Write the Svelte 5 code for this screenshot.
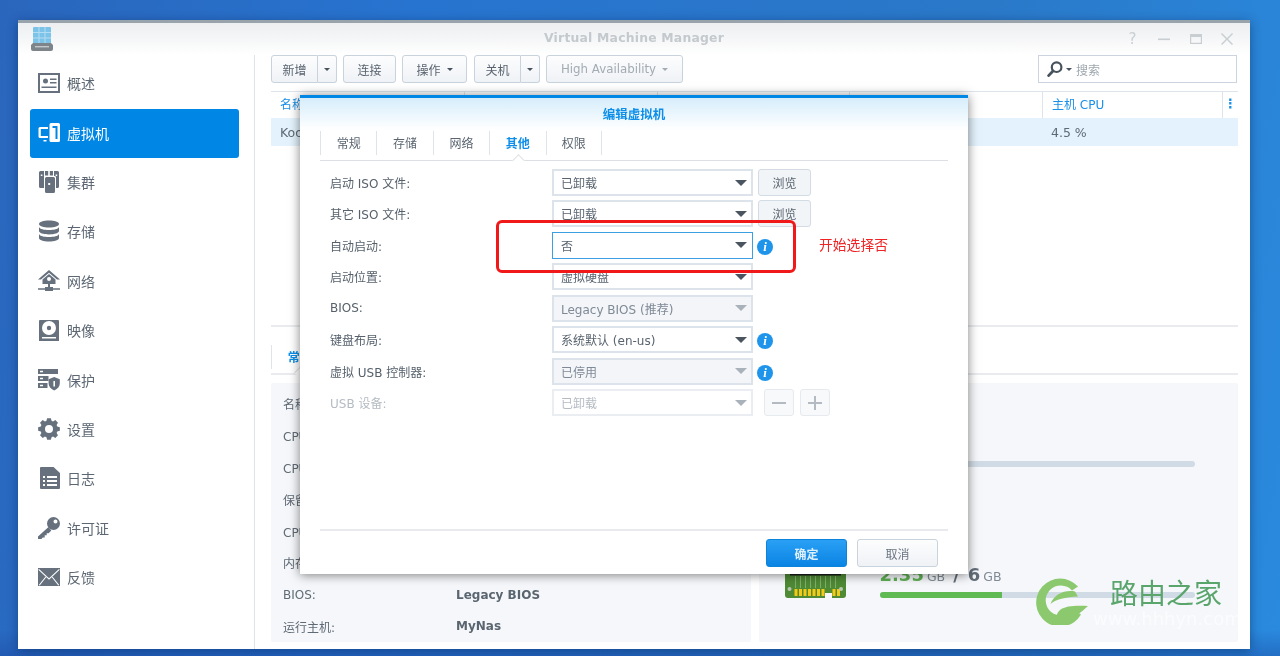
<script>
	// gear outline for the settings entry, 8 teeth around (11, 11)
	function gearPath() {
		const pts = [];
		for (let i = 0; i < 8; i++) {
			const a = (i * Math.PI) / 4;
			for (const [r, off] of [[8.6, -0.3], [11, -0.17], [11, 0.17], [8.6, 0.3]]) {
				pts.push(`${(11 + r * Math.cos(a + off)).toFixed(2)} ${(11 + r * Math.sin(a + off)).toFixed(2)}`);
			}
		}
		return `M${pts.join('L')}z M7 11a4 4 0 1 0 8 0a4 4 0 1 0-8 0z`;
	}

	const nav = [
		{ label: '概述', paths: ['M0 1h22v20H0z M2 3v16h18V3z M5 9a2.5 2.5 0 1 0 5 0a2.5 2.5 0 1 0-5 0z M12 6.5h6.5V8H12z M12 10h6.5v1.5H12z M3.5 14.5h15V16h-15z'] },
		{ label: '虚拟机', active: true, paths: ['M11.5 2.5A1.5 1.5 0 0 1 13 1h7.5A1.5 1.5 0 0 1 22 2.5v16a1.5 1.5 0 0 1-1.5 1.5H13a1.5 1.5 0 0 1-1.5-1.5z M14.5 4v2h3v11h2V4z', 'M10 5H2A1.5 1.5 0 0 0 .5 6.5v8A1.5 1.5 0 0 0 2 16h8v-2H2.8V7H10z M5.5 18h3v1.6h-3z'] },
		{ label: '集群', paths: ['M1 1.5A1.5 1.5 0 0 1 2.5 0H6v17H2.5A1.5 1.5 0 0 1 1 15.5z M2.8 3.5v1.6h1.6V3.5z', 'M16 0h3.5A1.5 1.5 0 0 1 21 1.5v14a1.5 1.5 0 0 1-1.5 1.5H18V6.5A1.5 1.5 0 0 0 16 5z M17.6 3.5v1.6h1.6V3.5z', 'M7 0h3.2v4.6H7z M11.8 0H15v4.6h-3.2z', 'M7 7.5A1.5 1.5 0 0 1 8.5 6h7A1.5 1.5 0 0 1 17 7.5v13a1.5 1.5 0 0 1-1.5 1.5h-7A1.5 1.5 0 0 1 7 20.5z M10.2 12v2h2v-2z'] },
		{ label: '存储', paths: ['M1 4c0-2 4.5-3.5 10-3.5S21 2 21 4s-4.5 3.5-10 3.5S1 6 1 4z', 'M1 7c1 2.2 5 3 10 3s9-.8 10-3v4c0 2-4.5 3.4-10 3.4S1 13 1 11z', 'M1 14c1 2.2 5 3 10 3s9-.8 10-3v4c0 2-4.5 3.5-10 3.5S1 20 1 18z'] },
		{ label: '网络', paths: ['M11 0l11 9.5h-3L11 2.8 3 9.5H0z', 'M4.5 9.4L11 4l6.5 5.4V14h-13z M9 9a2 2 0 1 0 4 0a2 2 0 1 0-4 0z', 'M10 14h2v3h-2z', 'M0 18.2h7V17h8v1.2h7v1.5h-7V21H7v-1.3H0z'] },
		{ label: '映像', paths: ['M1 2a1 1 0 0 1 1-1h18a1 1 0 0 1 1 1v20H1z M4 9a7 7 0 1 0 14 0a7 7 0 1 0-14 0z M8.8 9a2.2 2.2 0 1 0 4.4 0a2.2 2.2 0 1 0-4.4 0z M4 18h14v1.6H4z'] },
		{ label: '保护', paths: ['M0 0h20v5H0z M2 1.8v1.5h3V1.8z', 'M0 7h10.5v5H0z M2 8.8v1.5h3V8.8z', 'M0 14h9.5v5H0z M2 15.8v1.5h3v-1.5z', 'M16.2 8l5.6 2.2v4.6c0 3-2.6 5.2-5.6 6.6-3-1.4-5.6-3.6-5.6-6.6v-4.6z M15.4 12v5.5H17V12z'] },
		{ label: '设置', paths: [gearPath()] },
		{ label: '日志', paths: ['M2 1a1 1 0 0 1 1-1h12.5L22 6v15a1 1 0 0 1-1 1H3a1 1 0 0 1-1-1z M5 9v2h2V9z M9 9v2h10V9z M5 13v2h2v-2z M9 13v2h10v-2z M5 17v2h2v-2z M9 17v2h10v-2z'] },
		{ label: '许可证', paths: ['M9 6.5a6.5 6.5 0 1 0 13 0a6.5 6.5 0 1 0-13 0z M15.5 4.5a2 2 0 1 0 4 0a2 2 0 1 0-4 0z', 'M10.5 10L0 19.5V22h3.5l1.2-1.6h2v-2.1h2v-2.1h2l2.6-2.6z'] },
		{ label: '反馈', paths: ['M0 2h22v18H0z M1 3l10 9.3L21 3l.7.8L11 13.8.3 3.8z M.8 19L7.6 10.4l.8.7-6.7 8.5z M21.2 19l-6.8-8.6-.8.7 6.7 8.5z'] }
	];

	const columns = ['名称', '状态', '运行主机', 'IP 地址', '主机 CPU'];
	const dialogTabs = ['常规', '存储', '网络', '其他', '权限'];

	const fields = [
		{ label: '启动 ISO 文件:', value: '已卸载', after: 'browse' },
		{ label: '其它 ISO 文件:', value: '已卸载', after: 'browse' },
		{ label: '自动启动:', value: '否', state: 'focus', after: 'info' },
		{ label: '启动位置:', value: '虚拟硬盘' },
		{ label: 'BIOS:', value: 'Legacy BIOS (推荐)', state: 'disabled' },
		{ label: '键盘布局:', value: '系统默认 (en-us)', after: 'info' },
		{ label: '虚拟 USB 控制器:', value: '已停用', state: 'disabled', after: 'info' },
		{ label: 'USB 设备:', value: '已卸载', state: 'off', after: 'stepper' }
	];

	const details = [
		['名称:', 'Koolshare'],
		['CPU 数量:', '2'],
		['CPU 兼容模式:', '已停用'],
		['保留 CPU 线程:', '已停用'],
		['CPU 优先级:', '普通'],
		['内存:', '2 GB'],
		['BIOS:', 'Legacy BIOS'],
		['运行主机:', 'MyNas']
	];
</script>

<div class="desktop">
	<div class="window">
		<header class="titlebar">
			<svg class="app-icon" viewBox="0 0 22 24" width="22" height="24" aria-hidden="true">
				<path fill="#7cc3ea" d="M2 1a1 1 0 0 1 1-1h16a1 1 0 0 1 1 1v16H2z" />
				<path fill="none" stroke="#b4dcf2" stroke-width="1" d="M8 0v17M14 0v17M2 5.5h18M2 11h18" />
				<path fill="#7d858b" d="M2 16h18l2 2v4a2 2 0 0 1-2 2H2a2 2 0 0 1-2-2v-4z" />
				<path fill="#c3c8cc" d="M4 19h14v1.4H4z" />
			</svg>
			<div class="title">Virtual Machine Manager</div>
			<div class="win-controls">
				<span class="help">?</span>
				<svg viewBox="0 0 12 12" width="12" height="12"><path d="M0 5.5h12v1.6H0z" /></svg>
				<svg viewBox="0 0 12 12" width="12" height="12"><path fill-rule="evenodd" d="M0 1h12v10H0z M1.2 4v5.8h9.6V4z" /></svg>
				<svg viewBox="0 0 12 12" width="12" height="12"><path d="M1 0l5 5 5-5 1 1-5 5 5 5-1 1-5-5-5 5-1-1 5-5-5-5z" /></svg>
			</div>
		</header>

		<div class="body">
			<nav class="sidebar">
				{#each nav as item}
					<div class="nav-item" class:active={item.active}>
						<svg viewBox="0 0 22 22" width="22" height="22" aria-hidden="true">
							{#each item.paths as d}
								<path fill="currentColor" fill-rule="evenodd" {d} />
							{/each}
						</svg>
						<span>{item.label}</span>
					</div>
				{/each}
			</nav>

			<main class="main">
				<div class="toolbar">
					<div class="btn-split">
						<button class="btn">新增</button>
						<button class="btn btn-caret"><span class="caret"></span></button>
					</div>
					<button class="btn">连接</button>
					<button class="btn">操作<span class="caret"></span></button>
					<div class="btn-split btn-split-power">
						<button class="btn">关机</button>
						<button class="btn btn-caret"><span class="caret"></span></button>
					</div>
					<button class="btn btn-muted">High Availability<span class="caret"></span></button>
					<div class="search">
						<svg viewBox="0 0 16 16" width="16" height="16" aria-hidden="true">
							<circle cx="9.6" cy="6.2" r="4.8" fill="none" stroke="#47525d" stroke-width="2.2" />
							<path d="M6 10L1.6 14.6" stroke="#47525d" stroke-width="2.8" stroke-linecap="round" />
						</svg>
						<span class="caret"></span>
						<span class="search-hint">搜索</span>
					</div>
				</div>

				<section class="list">
					<div class="grid-row grid-head">
						{#each columns as col}
							<div class="cell">{col}</div>
						{/each}
						<div class="cell cell-menu">⋮</div>
					</div>
					<div class="grid-row grid-data">
						<div class="cell">Koolshare</div>
						<div class="cell">运行中</div>
						<div class="cell">MyNas</div>
						<div class="cell">-</div>
						<div class="cell">4.5 %</div>
						<div class="cell"></div>
					</div>
				</section>

				<section class="detail">
					<div class="detail-tabs">
						<div class="tab active">常规</div>
					</div>
					<div class="panels">
						<div class="panel info-panel">
							{#each details as [key, val]}
								<div class="info-row">
									<span class="info-key">{key}</span>
									<span class="info-val">{val}</span>
								</div>
							{/each}
						</div>
						<div class="panel gauges">
							<div class="gauge gauge-cpu">
								<div class="gauge-track"><div class="gauge-fill" style="width: 4.5%"></div></div>
							</div>
							<div class="gauge">
								<svg class="ram" viewBox="0 0 61 27" width="61" height="27" aria-hidden="true">
									<path fill="#4f8a35" d="M0 0h61v23a3 3 0 0 1-3 3H47v-5h-7v5H3a3 3 0 0 1-3-3z" />
									<path fill="#1d1d1d" d="M5 0h51v3.5H5z" />
									<path fill="#8cb878" d="M10 4h.8v12H10z M15 4h.8v12H15z M20 4h.8v12H20z M25 4h.8v12H25z M30 4h.8v12H30z M35 4h.8v12H35z M40 4h.8v12H40z M45 4h.8v12H45z M50 4h.8v12H50z" />
									<path fill="#f6c915" d="M9.5 17h3v7h-3z M14 17h3v7h-3z M18.5 17h3v7h-3z M23 17h3v7h-3z M27.5 17h3v7h-3z M32 17h3v7h-3z M36.5 17h3v7h-3z M47.5 17h3v7h-3z M52 17h3v7h-3z" />
									<circle cx="4.5" cy="17" r="2" fill="#b9c7b0" />
									<circle cx="56" cy="17" r="2" fill="#b9c7b0" />
								</svg>
								<div class="gauge-main">
									<div class="gauge-text"><b class="used">2.35</b><small>GB</small><b class="slash">/</b><b>6</b><small>GB</small></div>
									<div class="gauge-track"><div class="gauge-fill" style="width: 38.8%"></div></div>
								</div>
							</div>
						</div>
					</div>
				</section>
			</main>
		</div>

		<div class="dialog">
			<div class="dialog-title">编辑虚拟机</div>
			<div class="dialog-tabs">
				{#each dialogTabs as t}
					<div class="tab" class:active={t === '其他'}>{t}</div>
				{/each}
			</div>
			<div class="form">
				{#each fields as f}
					<div class="field" class:off={f.state === 'off'}>
						<div class="field-label">{f.label}</div>
						<div class="select {f.state ?? ''}">
							<span>{f.value}</span>
							<span class="select-arrow"></span>
						</div>
						{#if f.after === 'browse'}
							<button class="btn btn-browse">浏览</button>
						{:else if f.after === 'info'}
							<i class="info">i</i>
						{:else if f.after === 'stepper'}
							<div class="stepper">
								<button class="btn btn-step" aria-label="remove"><svg viewBox="0 0 14 14" width="14" height="14"><path d="M0 6h14v2H0z" /></svg></button>
								<button class="btn btn-step" aria-label="add"><svg viewBox="0 0 14 14" width="14" height="14"><path d="M6 0h2v6h6v2H8v6H6V8H0V6h6z" /></svg></button>
							</div>
						{/if}
					</div>
				{/each}
			</div>
			<div class="dialog-foot">
				<button class="btn btn-primary">确定</button>
				<button class="btn btn-cancel">取消</button>
			</div>
		</div>
	</div>

	<!-- annotation drawn on top of the capture -->
	<div class="mark"></div>
	<div class="mark-note">开始选择否</div>

	<div class="watermark">
		<svg viewBox="0 0 53 48" width="53" height="48" aria-hidden="true">
			<path fill="#8cc96e" d="M43 9.5A24 24 0 1 0 46 37.5L38 32A15 15 0 1 1 37 13.5z" />
			<path fill="#8cc96e" d="M40 14.5C30 12.5 19 17 15.5 27C20 22.5 31 20 43 19.5z" />
			<path fill="#8cc96e" d="M53 29C44 28.5 31 28 25 33C21.5 36 21 40 22 42C30 43 36 42 42 38C47 34.5 50 31.5 53 29z" />
		</svg>
		<div class="wm-name">路由之家</div>
		<div class="wm-url">www.hhhyn.com</div>
	</div>
</div>

<style>
	:global(body) {
		margin: 0;
		background: #2468c4;
	}

	.desktop {
		position: relative;
		width: 1280px;
		height: 656px;
		overflow: hidden;
		background:
			linear-gradient(to bottom, transparent 96%, rgba(20, 60, 150, 0.35)),
			linear-gradient(100deg, #2a66bc 0%, #2774d0 30%, #2a78c8 70%, #2a8ade 100%);
		font-family: "DejaVu Sans", "Noto Sans CJK SC", sans-serif;
		font-size: 12px;
		color: #5a6570;
		/* the capture is an upscaled, slightly soft image */
		filter: blur(0.4px);
	}

	.window {
		position: absolute;
		left: 18px;
		top: 20px;
		width: 1232px;
		height: 629px;
		box-sizing: border-box;
		display: flex;
		flex-direction: column;
		background: #fff;
		border-top: 3px solid #98a3ab;
		box-shadow: 0 2px 10px rgba(0, 30, 80, 0.45);
	}

	.titlebar {
		flex: none;
		height: 32px;
		display: grid;
		grid-template-columns: 1fr auto 1fr;
		align-items: start;
		padding: 4px 17px 0 13px;
		box-sizing: border-box;
		background: linear-gradient(#eceef0, #fff);
	}

	.app-icon {
		display: block;
	}

	.title {
		margin: 3px 0 0 4px;
		font-size: 12.4px;
		font-weight: bold;
		color: #c4c9ce;
		letter-spacing: 0.2px;
	}

	.win-controls {
		justify-self: end;
		display: flex;
		align-items: center;
		gap: 19.5px;
		margin-top: 6px;
		fill: #c9ced3;
	}

	.help {
		width: 12px;
		text-align: center;
		font-size: 15px;
		line-height: 12px;
		color: #c9ced3;
	}

	.body {
		flex: 1;
		display: flex;
		min-height: 0;
	}

	.sidebar {
		flex: none;
		width: 237px;
		box-sizing: border-box;
		padding: 4.6px 15px 0 12px;
		border-right: 1px solid #dfe3e7;
	}

	.nav-item {
		height: 49.4px;
		box-sizing: border-box;
		display: flex;
		align-items: center;
		gap: 7px;
		padding: 0 0 2px 8px;
		border-radius: 3px;
		font-size: 14px;
		color: #5c6773;
	}

	.nav-item svg {
		flex: none;
		color: #66717d;
	}

	.nav-item.active {
		background: #0086e5;
		color: #fff;
	}

	.nav-item.active svg {
		color: #fff;
	}

	.main {
		flex: 1;
		min-width: 0;
		display: flex;
		flex-direction: column;
		padding: 0 12px 8px 16px;
	}

	.toolbar {
		flex: none;
		display: flex;
		gap: 6px;
		height: 28px;
		margin-bottom: 8px;
	}

	.btn {
		box-sizing: border-box;
		height: 28px;
		padding: 0 13.5px;
		display: inline-flex;
		align-items: center;
		justify-content: center;
		gap: 6px;
		border: 1px solid #c8d3de;
		border-radius: 3px;
		background: linear-gradient(#fdfdfe, #eff2f6);
		font: inherit;
		color: #59646f;
	}

	.btn-split {
		display: flex;
	}

	.btn-split-power {
		margin-left: 1px;
	}

	.btn-split .btn:first-child {
		width: 47px;
		padding: 0;
		border-radius: 3px 0 0 3px;
	}

	.btn-caret {
		width: 19px;
		padding: 0;
		border-left: 0;
		border-radius: 0 3px 3px 0;
	}

	.btn-muted {
		width: 137px;
		padding: 0;
		font-size: 11.8px;
		color: #a3abb3;
	}

	.btn-muted .caret {
		border-top-color: #a3abb3;
	}

	.caret {
		display: inline-block;
		width: 0;
		height: 0;
		border: 3.5px solid transparent;
		border-top: 3.5px solid #47525d;
		border-bottom: 0;
	}

	.search {
		margin-left: auto;
		margin-right: 1px;
		width: 199px;
		box-sizing: border-box;
		display: flex;
		align-items: center;
		gap: 3px;
		padding-left: 8px;
		border: 1px solid #ccd5df;
		background: #fff;
	}

	.search-hint {
		margin-left: 1px;
		color: #a0a8b0;
	}

	.list {
		flex: none;
		height: 234px;
		border-top: 1px solid #dde4ec;
		box-sizing: border-box;
	}

	.grid-row {
		display: grid;
		grid-template-columns: 193px 193px 192px 193px 180px 16px;
		align-items: center;
	}

	.grid-head {
		height: 26px;
		color: #1a90e8;
	}

	.grid-head .cell {
		height: 100%;
		display: flex;
		align-items: center;
		padding: 0 0 3px 9px;
		box-sizing: border-box;
	}

	.grid-head .cell + .cell {
		border-left: 1px solid #dde4ec;
	}

	.grid-head .cell-menu {
		padding: 0 0 3px;
		justify-content: center;
		font-weight: bold;
		font-size: 13px;
	}

	.grid-data {
		height: 28px;
		background: #e3f2fc;
		color: #5e6974;
		font-size: 12.5px;
	}

	.grid-data .cell {
		padding-left: 9px;
	}

	.detail {
		flex: 1;
		min-height: 0;
		display: flex;
		flex-direction: column;
		border-top: 2px solid #e9ebee;
	}

	.detail-tabs {
		flex: none;
		height: 48px;
		box-sizing: border-box;
		display: flex;
		padding-top: 18px;
		border-bottom: 2px solid #e9ebee;
	}

	.tab {
		position: relative;
		width: 56.4px;
		height: 24px;
		box-sizing: border-box;
		display: flex;
		align-items: center;
		justify-content: center;
		padding-bottom: 2px;
		border-left: 1px solid #dfe4ea;
		color: #5a6570;
	}

	.tab.active {
		color: #0d8fe9;
		font-weight: bold;
	}

	.tab.active::after {
		content: "";
		position: absolute;
		left: 50%;
		bottom: -8px;
		width: 8px;
		height: 8px;
		margin-left: -4px;
		transform: rotate(45deg);
		background: #fff;
		border-left: 1px solid #dcdfe3;
		border-top: 1px solid #dcdfe3;
	}

	.panels {
		flex: 1;
		min-height: 0;
		display: grid;
		grid-template-columns: 1fr 1fr;
		gap: 8px;
		margin-top: 8px;
	}

	.panel {
		background: #f5f7fa;
		border-radius: 2px;
	}

	.info-panel {
		padding: 5px 12px 0;
	}

	.info-row {
		height: 31.8px;
		display: flex;
		align-items: center;
	}

	.info-key {
		width: 173px;
		flex: none;
		color: #5f6a75;
	}

	.info-val {
		font-weight: bold;
		color: #5a6570;
	}

	.gauges {
		padding: 48px 43px 0 26px;
		display: flex;
		flex-direction: column;
		gap: 95px;
	}

	.gauge {
		display: flex;
		align-items: flex-end;
		gap: 34px;
	}

	.gauge-cpu {
		height: 36px;
		padding-left: 95px;
	}

	.gauge-main {
		flex: 1;
	}

	.gauge-text {
		height: 25px;
		margin-bottom: 5px;
		display: flex;
		align-items: baseline;
		gap: 3px;
		font-size: 18px;
		line-height: 25px;
		color: #626d78;
	}

	.gauge-text .used {
		color: #5fb053;
	}

	.gauge-text small {
		font-size: 12.5px;
		color: #808a94;
	}

	.gauge-text .slash {
		margin: 0 5px;
	}

	.gauge-track {
		flex: 1;
		height: 6px;
		border-radius: 3px;
		background: #d0dbe5;
		overflow: hidden;
	}

	.gauge-fill {
		height: 100%;
		background: #60ba54;
	}

	.ram {
		flex: none;
		margin-bottom: -1px;
	}

	/* modal */
	.dialog {
		position: absolute;
		left: 282px;
		top: 72px;
		width: 668px;
		height: 479px;
		box-sizing: border-box;
		display: flex;
		flex-direction: column;
		background: #fff;
		border-top: 3px solid #0086e5;
		box-shadow: 0 1px 10px rgba(0, 0, 0, 0.5);
	}

	.dialog-title {
		flex: none;
		height: 32px;
		box-sizing: border-box;
		padding-bottom: 2px;
		display: flex;
		align-items: center;
		justify-content: center;
		background: linear-gradient(#d6edfb, #fff);
		font-size: 12.5px;
		font-weight: bold;
		color: #0d8fe9;
	}

	.dialog-tabs {
		flex: none;
		height: 31px;
		box-sizing: border-box;
		margin: 0 20px;
		padding-top: 1px;
		display: flex;
		border-bottom: 1px solid #dcdfe3;
	}

	.dialog-tabs .tab:last-child {
		border-right: 1px solid #dfe4ea;
	}

	.dialog-tabs .tab.active::after {
		bottom: -10px;
	}

	.form {
		flex: 1;
		padding: 8px 0 0 30px;
		display: flex;
		flex-direction: column;
		gap: 4.45px;
	}

	.field {
		height: 27px;
		display: flex;
		align-items: center;
	}

	.field-label {
		flex: none;
		width: 222px;
		color: #56616c;
	}

	.field.off .field-label {
		color: #b5bbc3;
	}

	.select {
		flex: none;
		box-sizing: border-box;
		width: 201px;
		height: 27px;
		display: flex;
		align-items: center;
		justify-content: space-between;
		padding: 0 4px 0 7px;
		border: 2px solid #dde3ea;
		color: #59646f;
	}

	.select.focus {
		border: 1px solid #3c9fe4;
		padding: 0 5px 0 8px;
	}

	.select.disabled {
		background: #f3f5f8;
		color: #7f8a96;
	}

	.select.off {
		border-color: #eaeef2;
		color: #b5bbc3;
	}

	.select-arrow {
		width: 0;
		height: 0;
		border: 6px solid transparent;
		border-top: 6px solid #4a5560;
		border-bottom: 0;
	}

	.select.disabled .select-arrow,
	.select.off .select-arrow {
		border-top-color: #a9b2bb;
	}

	.btn-browse {
		width: 53px;
		height: 27px;
		margin-left: 5px;
		padding: 0;
		border-color: #d3dbe4;
		background: #f2f5f8;
	}

	.info {
		margin: 3px 0 0 4px;
		width: 16px;
		height: 16px;
		border-radius: 50%;
		background: #1e94ea;
		color: #fff;
		display: flex;
		align-items: center;
		justify-content: center;
		font: italic bold 13px "Liberation Serif", serif;
	}

	.stepper {
		display: flex;
		gap: 6px;
		margin-left: 11px;
	}

	.btn-step {
		width: 30px;
		height: 27px;
		padding: 0;
		background: #f7f9fb;
		border-color: #e6eaee;
		fill: #b3bac2;
	}

	.dialog-foot {
		flex: none;
		height: 45px;
		box-sizing: border-box;
		margin: 0 20px;
		padding: 8px 10px 0 0;
		display: flex;
		justify-content: flex-end;
		gap: 10px;
		border-top: 2px solid #e8eaee;
	}

	.btn-primary,
	.btn-cancel {
		width: 81px;
		padding: 0;
		font-weight: bold;
	}

	.btn-primary {
		background: linear-gradient(#2aa0f5, #0a84e4);
		border-color: #0d84dc;
		color: #dff0fd;
	}

	.btn-cancel {
		font-weight: normal;
		color: #6b7580;
	}

	.mark {
		position: absolute;
		left: 496px;
		top: 220px;
		width: 300px;
		height: 53px;
		box-sizing: border-box;
		border: 3px solid #f01818;
		border-radius: 6px;
	}

	.mark-note {
		position: absolute;
		left: 819px;
		top: 235px;
		font-size: 13.8px;
		line-height: 18px;
		font-family: "Noto Sans CJK SC", sans-serif;
		color: #f02424;
	}

	.watermark {
		position: absolute;
		left: 1035px;
		top: 577px;
		width: 205px;
		height: 60px;
		pointer-events: none;
	}

	.watermark svg {
		display: block;
	}

	.wm-name {
		position: absolute;
		left: 75px;
		top: 1px;
		font-family: "Noto Sans CJK SC", sans-serif;
		font-size: 28px;
		line-height: 28px;
		color: #5aa56c;
		white-space: nowrap;
	}

	.wm-url {
		position: absolute;
		left: 58px;
		top: 33px;
		font-size: 18px;
		line-height: 18px;
		color: rgba(255, 255, 255, 0.6);
		white-space: nowrap;
	}
</style>
